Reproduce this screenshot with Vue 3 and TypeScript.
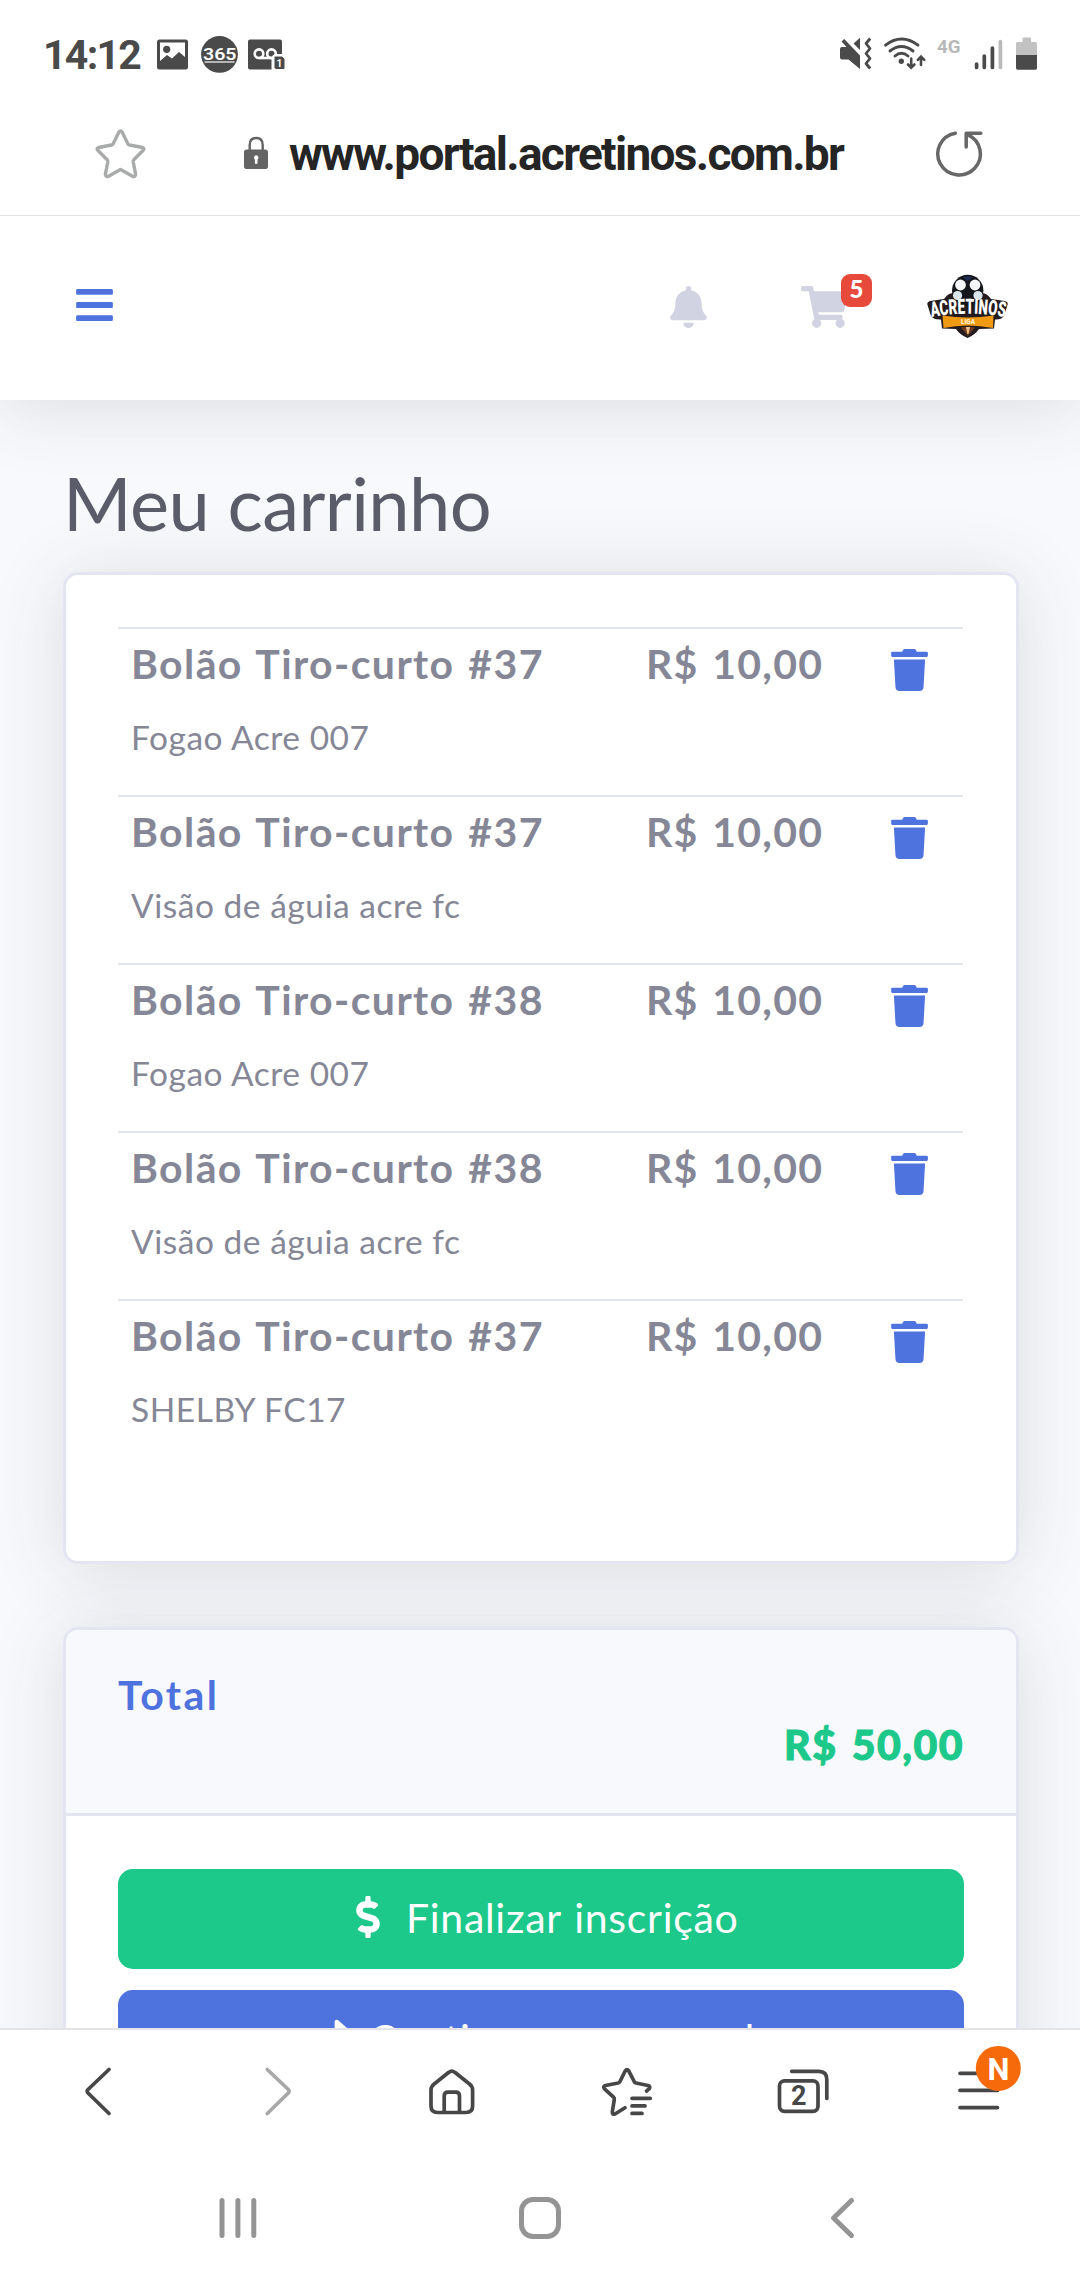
<script setup lang="ts">
interface CartItem {
  title: string
  price: string
  team: string
}

const items: CartItem[] = [
  { title: 'Bolão Tiro-curto #37', price: 'R$ 10,00', team: 'Fogao Acre 007' },
  { title: 'Bolão Tiro-curto #37', price: 'R$ 10,00', team: 'Visão de águia acre fc' },
  { title: 'Bolão Tiro-curto #38', price: 'R$ 10,00', team: 'Fogao Acre 007' },
  { title: 'Bolão Tiro-curto #38', price: 'R$ 10,00', team: 'Visão de águia acre fc' },
  { title: 'Bolão Tiro-curto #37', price: 'R$ 10,00', team: 'SHELBY FC17' },
]
</script>

<template>
  <div class="phone">
    <header class="status">
      <span class="clock">14:12</span>
      <svg class="status-left" width="130" height="40" viewBox="156 34 130 40">
        <rect x="157" y="39.5" width="31" height="30" rx="2.5" fill="#4a4a4a" />
        <path d="M160 42.5H185V57L179 52L172 58.5L167 55L160 61Z" fill="#fff" />
        <circle cx="166.7" cy="49.3" r="3.6" fill="#4a4a4a" />
        <circle cx="219.5" cy="54.4" r="18.4" fill="#4a4a4a" />
        <text x="203" y="60" textLength="33.5" lengthAdjust="spacingAndGlyphs" font-size="17" font-weight="600" fill="#fff">365</text>
        <path d="M204.500 62H234.500" stroke="#fff" stroke-width="1.200" />
        <path d="M250 39.5H280Q282 39.5 282 41.500V54H277Q271.500 54 271.500 59V69.500H250Q248 69.500 248 67.500V41.500Q248 39.500 250 39.500Z" fill="#4a4a4a" />
        <g fill="none" stroke="#fff" stroke-width="2.600">
          <circle cx="259" cy="53.700" r="4.300" />
          <circle cx="271.500" cy="53.700" r="4.300" />
          <path d="M259 58H272" />
        </g>
        <path d="M275 56H282L285 59V68Q285 69.500 283.500 69.500H276.500Q274 69.500 274 67.500V57Q274 56 275 56Z" fill="#4a4a4a" stroke="#fff" stroke-width="1" />
        <text x="276.600" y="66.800" font-size="10" font-weight="700" fill="#fff">1</text>
      </svg>
      <svg class="status-right" width="200" height="40" viewBox="838 34 200 40">
        <path d="M840 49Q840 47 842 47H846.500L841.500 41.500L844.200 39L860 55.500V69L848.500 59.500H842Q840 59.500 840 57.500Z" fill="#4a4a4a" />
        <path d="M853.500 43.500L860 37.800V50Z" fill="#4a4a4a" />
        <path d="M870.200 38.500L866 43.500L870 48.500L866 53.500L870 58.500L866 63.500L870.200 68.500" fill="none" stroke="#4a4a4a" stroke-width="2.800" stroke-linejoin="round" />
        <g fill="none" stroke="#4a4a4a" stroke-width="2.900" stroke-linecap="round">
          <path d="M885.500 45.200Q901.500 33 918 45.200" />
          <path d="M890 51Q901.500 42 913 51" />
          <path d="M895 56Q901.500 50.500 908 56" />
          <path d="M911.200 58.500V67M908 64.500L911.200 67.700L914.400 64.500M921 65V57M917.800 59.800L921 56.600L924.200 59.800" stroke-width="2.600" />
        </g>
        <circle cx="901.300" cy="61.200" r="2.700" fill="#4a4a4a" />
        <text x="937" y="52.500" textLength="23.500" lengthAdjust="spacingAndGlyphs" font-size="19" font-weight="700" fill="#b8b8b8">4G</text>
        <g stroke-width="3.700" stroke-linecap="round" stroke="#4a4a4a">
          <path d="M976.600 64V67.500M984.300 56V67.500M992.400 48V67.500" />
          <path d="M1000.400 41.500V67.500" stroke="#bababa" />
        </g>
        <path d="M1022.500 42V38.500Q1022.500 37.500 1023.500 37.500H1030Q1031 37.500 1031 38.500V42H1035.500Q1037 42 1037 43.500V56H1016V43.500Q1016 42 1017.500 42Z" fill="#c2c2c2" />
        <path d="M1016 55H1037V68Q1037 69.700 1035.500 69.700H1017.500Q1016 69.700 1016 68Z" fill="#4a4a4a" />
      </svg>
    </header>

    <div class="address">
      <svg class="fav" width="54" height="54" viewBox="94 127 54 54">
        <path d="M118.800 132.200Q120.500 129.500 122.200 132.200L127.800 143.800Q128.300 144.900 129.500 145L142.500 147.500Q145 148.500 143 150.500L133.800 159.800Q133 160.700 133.200 162L135.600 174.200Q135.500 177.500 132.500 176.200L120.500 169.500L108.500 176.200Q105.500 177.500 105.400 174.200L107.800 162Q108 160.700 107.200 159.800L98 150.500Q96 148.500 98.500 147.500L111.500 145Q112.700 144.900 113.200 143.800Z" fill="none" stroke="#a9abab" stroke-width="3.400" stroke-linejoin="round" />
      </svg>
      <svg class="lock" width="26" height="34" viewBox="243 136 26 34">
        <path d="M249.700 150V145Q249.700 138 256.200 138T262.700 145V150" fill="none" stroke="#646464" stroke-width="2.400" />
        <rect x="244" y="149.500" width="24" height="19.500" rx="2.800" fill="#646464" />
        <path d="M256.200 155.200a2.400 2.400 0 0 1 1.300 4.300v3.200a1.300 1.300 0 0 1 -2.600 0v-3.200a2.400 2.400 0 0 1 1.300 -4.300Z" fill="#fff" />
      </svg>
      <span class="url">www.portal.acretinos.com.br</span>
      <svg class="reload" width="50" height="50" viewBox="935 128 50 50">
        <path d="M955.300 133.200A21.300 21 0 1 0 968 134.800M966.200 147V133.300H980.800" fill="none" stroke="#676767" stroke-width="3.500" stroke-linecap="round" stroke-linejoin="round" />
      </svg>
    </div>

    <main class="page">
      <nav class="topbar">
        <svg class="burger" width="37" height="42" viewBox="0 0 448 512" fill="#4e73df">
          <path d="M16 132h416c8.837 0 16-7.163 16-16V76c0-8.837-7.163-16-16-16H16C7.163 60 0 67.163 0 76v40c0 8.837 7.163 16 16 16zm0 160h416c8.837 0 16-7.163 16-16v-40c0-8.837-7.163-16-16-16H16c-8.837 0-16 7.163-16 16v40c0 8.837 7.163 16 16 16zm0 160h416c8.837 0 16-7.163 16-16v-40c0-8.837-7.163-16-16-16H16c-8.837 0-16 7.163-16 16v40c0 8.837 7.163 16 16 16z" />
        </svg>
        <svg class="bell" width="37" height="42" viewBox="0 0 448 512" fill="#d1d3e2">
          <path d="M224 512c35.320 0 63.970-28.650 63.970-64H160.030c0 35.350 28.650 64 63.970 64zm215.390-149.710c-19.320-20.760-55.470-51.990-55.470-154.290 0-77.700-54.480-139.900-127.940-155.160V32c0-17.670-14.320-32-31.980-32s-31.980 14.330-31.980 32v20.840C118.560 68.100 64.080 130.300 64.080 208c0 102.300-36.150 133.530-55.470 154.290-6 6.450-8.660 14.160-8.610 21.710.11 16.400 12.980 32 32.100 32h383.800c19.120 0 32-15.600 32.100-32 .05-7.550-2.610-15.270-8.610-21.710z" />
        </svg>
        <div class="cart">
          <svg width="47" height="42" viewBox="0 0 576 512" fill="#d1d3e2">
            <path d="M528.120 301.319l47.273-208C578.806 78.301 567.391 64 551.990 64H159.208l-9.166-44.810C147.758 8.021 137.930 0 126.529 0H24C10.745 0 0 10.745 0 24v16c0 13.255 10.745 24 24 24h69.883l70.248 343.435C147.325 417.100 136 435.222 136 456c0 30.928 25.072 56 56 56s56-25.072 56-56c0-15.674-6.447-29.835-16.824-40h209.647C430.447 426.165 424 440.326 424 456c0 30.928 25.072 56 56 56s56-25.072 56-56c0-22.172-12.888-41.332-31.579-50.405l5.517-24.276c3.413-15.018-8.002-29.319-23.403-29.319H218.117l-6.545-32h293.145c11.206 0 20.920-7.754 23.403-18.681z" />
          </svg>
          <span class="count">5</span>
        </div>
        <svg class="logo" width="84" height="68" viewBox="925 272 84 68">
          <path d="M944 299Q948 293 953 293H982Q987 293 991 299L1005 301Q1008.500 302 1007.500 305L1004 316Q1001 320 995 319.500L994 328.500L979 329Q975 335 967.500 338Q960 335 956 329L942 328.500L941 319.500Q934 320 931 316L927.500 305Q926.500 302 930 301Z" fill="#241b1e" />
          <circle cx="967.700" cy="290.500" r="15.700" fill="#15161c" />
          <circle cx="960.500" cy="285" r="5.400" fill="#f4f6f8" />
          <circle cx="975" cy="285" r="5.400" fill="#f4f6f8" />
          <circle cx="957.500" cy="295.500" r="4.600" fill="#dce5ec" />
          <circle cx="978" cy="295.500" r="4.600" fill="#dce5ec" />
          <path d="M963 277.500Q967.700 275 972.500 277.500L967.700 281Z" fill="#1e2c55" />
          <path d="M942.500 315.500Q967.500 319.500 993.500 315.500L993 328Q967.500 323 943.500 328Z" fill="#f09a14" />
          <path d="M961 327.500Q968 326 975 327.500L967.800 336Z" fill="#6b3a1c" />
          <path d="M966 327H970L968.500 334H967.300Z" fill="#f0c08a" />
          <text x="968" y="323.500" text-anchor="middle" textLength="14" lengthAdjust="spacingAndGlyphs" font-size="7" font-weight="900" fill="#fff3d0">LIGA</text>
          <path id="logo-arc" d="M927 318Q967.700 309.500 1010 318" fill="none" />
          <text font-size="21" font-weight="900" fill="#fff">
            <textPath href="#logo-arc" startOffset="4.500" textLength="74" lengthAdjust="spacingAndGlyphs">ACRETINOS</textPath>
          </text>
        </svg>
      </nav>

      <section class="content">
        <h1>Meu carrinho</h1>

        <div class="card items">
          <div v-for="(item, i) in items" :key="i" class="row">
            <div class="info">
              <div class="title">{{ item.title }}</div>
              <div class="team">{{ item.team }}</div>
            </div>
            <div class="price">{{ item.price }}</div>
            <svg class="trash" width="37" height="42" viewBox="0 0 448 512" fill="#4e73df">
              <path d="M432 32H312l-9.400-18.700A24 24 0 0 0 281.100 0H166.800a23.720 23.720 0 0 0-21.400 13.300L136 32H16A16 16 0 0 0 0 48v32a16 16 0 0 0 16 16h416a16 16 0 0 0 16-16V48a16 16 0 0 0-16-16zM34 128L53.200 467a48 48 0 0 0 47.900 45h245.800a48 48 0 0 0 47.900-45L414 128z" />
            </svg>
          </div>
        </div>

        <div class="card summary">
          <div class="summary-head">
            <div class="label">Total</div>
            <div class="amount">R$ 50,00</div>
          </div>
          <div class="actions">
            <button class="btn green">
              <svg width="24" height="42" viewBox="0 0 288 512" fill="#fff">
                <path d="M209.200 233.400l-108-31.600C88.700 198.200 80 186.500 80 173.500c0-16.300 13.200-29.500 29.500-29.500h66.300c12.200 0 24.200 3.700 34.200 10.500 6.100 4.100 14.300 3.100 19.500-2l34.800-34c7.100-6.900 6.100-18.400-1.800-24.500C238 74.800 207.400 64.100 176 64V16c0-8.800-7.200-16-16-16h-32c-8.800 0-16 7.200-16 16v48h-2.500C45.800 64-5.400 118.700.500 183.600c4.200 46.100 39.400 83.600 83.800 96.600l102.500 30c12.500 3.700 21.200 15.300 21.200 28.300 0 16.300-13.200 29.500-29.500 29.500h-66.300C100 368 88 364.300 78 357.500c-6.100-4.100-14.300-3.100-19.500 2l-34.800 34c-7.100 6.900-6.100 18.400 1.800 24.500 24.500 19.200 55.100 29.900 86.500 30v48c0 8.800 7.200 16 16 16h32c8.800 0 16-7.200 16-16v-48.200c46.600-.9 90.300-28.600 105.700-72.700 21.500-61.600-14.600-124.800-72.500-141.700z" />
              </svg>
              <span>Finalizar inscrição</span>
            </button>
            <button class="btn blue">
              <svg width="42" height="42" viewBox="0 0 512 512" fill="#fff">
                <path d="M503.691 189.836L327.687 37.851C312.281 24.546 288 35.347 288 56.015v80.053C127.371 137.907 0 170.100 0 322.326c0 61.441 39.581 122.309 83.333 154.132 13.653 9.931 33.111-2.533 28.077-18.631C66.066 312.814 132.917 274.316 288 272.085V360c0 20.700 24.300 31.453 39.687 18.164l176.004-152c11.071-9.562 11.086-26.753 0-36.328z" />
              </svg>
              <span>Continuar comprando</span>
            </button>
          </div>
        </div>
      </section>
    </main>

    <footer class="toolbar">
      <svg width="1080" height="100" viewBox="0 2040 1080 100" fill="none" stroke="#474747" stroke-width="3.700" stroke-linecap="round" stroke-linejoin="round">
        <path d="M109 2069.500L88 2089.500Q86.500 2091.300 88 2093L109 2113.500" />
        <path d="M267.300 2069.500L288.300 2089.500Q289.800 2091.300 288.300 2093L267.300 2113.500" stroke="#a8a8a8" />
        <path d="M448.800 2072.300Q451.800 2069.800 454.800 2072.300L469.500 2084Q472.600 2086.500 472.600 2090V2106Q472.600 2112.500 466 2112.500H437.500Q431 2112.500 431 2106V2090Q431 2086.500 434.200 2084ZM444.200 2112V2096Q444.200 2092.200 448 2092.200H455.700Q459.500 2092.200 459.500 2096V2112" />
        <path d="M646.500 2091L649.500 2088.300Q650.500 2086.300 648 2085.500L636 2083Q634.700 2082.700 634.200 2081.500L628.700 2070.800Q627 2068.500 625.300 2070.800L620 2081.500Q619.400 2082.700 618.200 2083L605.500 2085.500Q602.500 2086.500 604.500 2088.800L613.500 2097.200Q614.500 2098.100 614.300 2099.500L612.300 2112Q612.300 2115 615 2114L625 2107.800M632 2098.300H650.300M632 2105.900H645M632 2113.400H642" />
        <rect x="779.500" y="2080.800" width="38.500" height="30.500" rx="5" />
        <path d="M791.700 2071.300H819Q826.800 2071.300 826.800 2079.500V2098.500" />
        <path d="M960 2073.300H997M960 2090.400H997.500M960 2107.600H997.500" />
        <circle cx="998.300" cy="2068.400" r="22.500" fill="#f66a0c" stroke="none" />
        <text x="798.800" y="2105" text-anchor="middle" font-size="27" font-weight="700" fill="#474747" stroke="none">2</text>
        <text x="998.500" y="2080" text-anchor="middle" font-size="31" font-weight="700" fill="#fff" stroke="none">N</text>
      </svg>
    </footer>

    <nav class="system">
      <svg width="640" height="50" viewBox="217 2193 640 50" fill="none" stroke="#949494" stroke-width="5" stroke-linecap="round" stroke-linejoin="round">
        <path d="M222 2200.500V2235.500M237.900 2200.500V2235.500M253.800 2200.500V2235.500" />
        <rect x="521.500" y="2199.500" width="37" height="37" rx="11.500" />
        <path d="M851.500 2200.500L833.500 2218L851.500 2235.500" />
      </svg>
    </nav>
  </div>
</template>

<style>
body {
  margin: 0;
  background: #fff;
}
</style>

<style scoped>
.phone {
  width: 1080px;
  height: 2280px;
  display: flex;
  flex-direction: column;
  overflow: hidden;
  background: #fff;
  font-family: Lato, "Noto Sans", sans-serif;
}
svg {
  display: block;
  flex: none;
  overflow: visible;
  font-family: Roboto, sans-serif;
}
.status {
  height: 74px;
  flex: none;
  display: flex;
  align-items: flex-end;
}
.clock {
  width: 113px;
  margin-left: 43px;
  font: 700 41px/38px Roboto, sans-serif;
  color: #4a4a4a;
  letter-spacing: -1.7px;
  white-space: nowrap;
}
.status-right {
  margin-left: 552px;
}
.address {
  height: 141px;
  flex: none;
  display: flex;
  align-items: flex-start;
  border-bottom: 1px solid #e2e2e2;
}
.fav {
  margin: 53px 0 0 94px;
}
.lock {
  margin: 62px 0 0 95px;
}
.url {
  width: 566px;
  margin: 55px 0 0 20px;
  font: 700 46px/50px Roboto, sans-serif;
  letter-spacing: -1.680px;
  color: #252525;
  white-space: nowrap;
}
.reload {
  margin: 54px 0 0 80px;
}
.page {
  height: 1812px;
  flex: none;
  overflow: hidden;
  background: #f8f9fc;
}
.topbar {
  height: 184px;
  display: flex;
  align-items: flex-start;
  background: #fff;
  box-shadow: 0 6.300px 73.500px 0 rgba(58, 59, 69, 0.15);
}
.burger {
  margin: 68px 0 0 76px;
}
.bell {
  margin: 70px 0 0 557px;
}
.cart {
  position: relative;
  margin: 70px 0 0 94px;
}
.count {
  position: absolute;
  left: 40px;
  top: -12px;
  width: 31px;
  height: 33px;
  border-radius: 9px;
  background: #e74a3b;
  color: #fff;
  font-size: 24px;
  font-weight: 900;
  line-height: 30px;
  text-align: center;
}
.logo {
  margin: 56px 0 0 77px;
}
.content {
  padding: 59px 61px 0 63px;
}
h1 {
  margin: 0 0 25px;
  font-size: 74px;
  font-weight: 400;
  line-height: 88px;
  letter-spacing: -0.580px;
  color: #5a5c69;
  white-space: nowrap;
}
.card {
  border: 3px solid #e3e6f0;
  border-radius: 15px;
  background: #fff;
  box-shadow: 0 6.300px 73.500px 0 rgba(58, 59, 69, 0.15);
}
.items {
  margin-bottom: 63px;
  padding: 52px 53px 94px 52px;
}
.row {
  box-sizing: border-box;
  height: 168px;
  display: flex;
  border-top: 2px solid #e3e6ec;
  color: #858796;
  white-space: nowrap;
}
.info {
  width: 515px;
  padding: 13px 0 0 13px;
}
.title,
.price {
  font-size: 41px;
  font-weight: 700;
  line-height: 44px;
}
.title {
  letter-spacing: 1.4px;
  word-spacing: 2.400px;
}
.price {
  width: 245px;
  padding-top: 13px;
  letter-spacing: 1.250px;
  word-spacing: 2.400px;
}
.team {
  margin-top: 31px;
  font-size: 33.500px;
  line-height: 40px;
  letter-spacing: 0.520px;
}
.trash {
  margin-top: 20px;
}
.summary-head {
  height: 183px;
  box-sizing: border-box;
  padding: 43px 53px 0 52px;
  border-radius: 12px 12px 0 0;
  background: #f8f9fc;
  font-size: 41px;
  line-height: 44px;
}
.label {
  font-weight: 700;
  letter-spacing: 2.500px;
  color: #4e73df;
}
.amount {
  margin: 6px -1px 0 0;
  text-align: right;
  font-weight: 900;
  letter-spacing: 1.500px;
  word-spacing: 3px;
  -webkit-text-stroke: 1px #1cc88a;
  color: #1cc88a;
}
.actions {
  display: flex;
  flex-direction: column;
  gap: 21px;
  padding: 53px 52px;
  border-top: 3px solid #e3e6f0;
}
.btn {
  height: 100px;
  display: flex;
  align-items: center;
  justify-content: center;
  padding: 0;
  border: 0;
  border-radius: 15px;
  color: #fff;
  font: 400 41px/48px Lato, "Noto Sans", sans-serif;
  letter-spacing: 0.7px;
  word-spacing: 2px;
  white-space: nowrap;
}
.btn span {
  margin-top: -3px;
}
.green {
  gap: 25.500px;
  padding-left: 13px;
  background: #1cc88a;
}
.green svg {
  margin-top: -5px;
}
.blue {
  gap: 16px;
  justify-content: flex-start;
  padding-left: 193px;
  letter-spacing: 0.9px;
  background: #4e73df;
}
.blue svg {
  margin-top: -5px;
}
.toolbar {
  height: 110px;
  flex: none;
  border-top: 2px solid #e4e4e8;
  padding-top: 10px;
}
.system {
  padding: 43px 0 0 217px;
}
</style>
